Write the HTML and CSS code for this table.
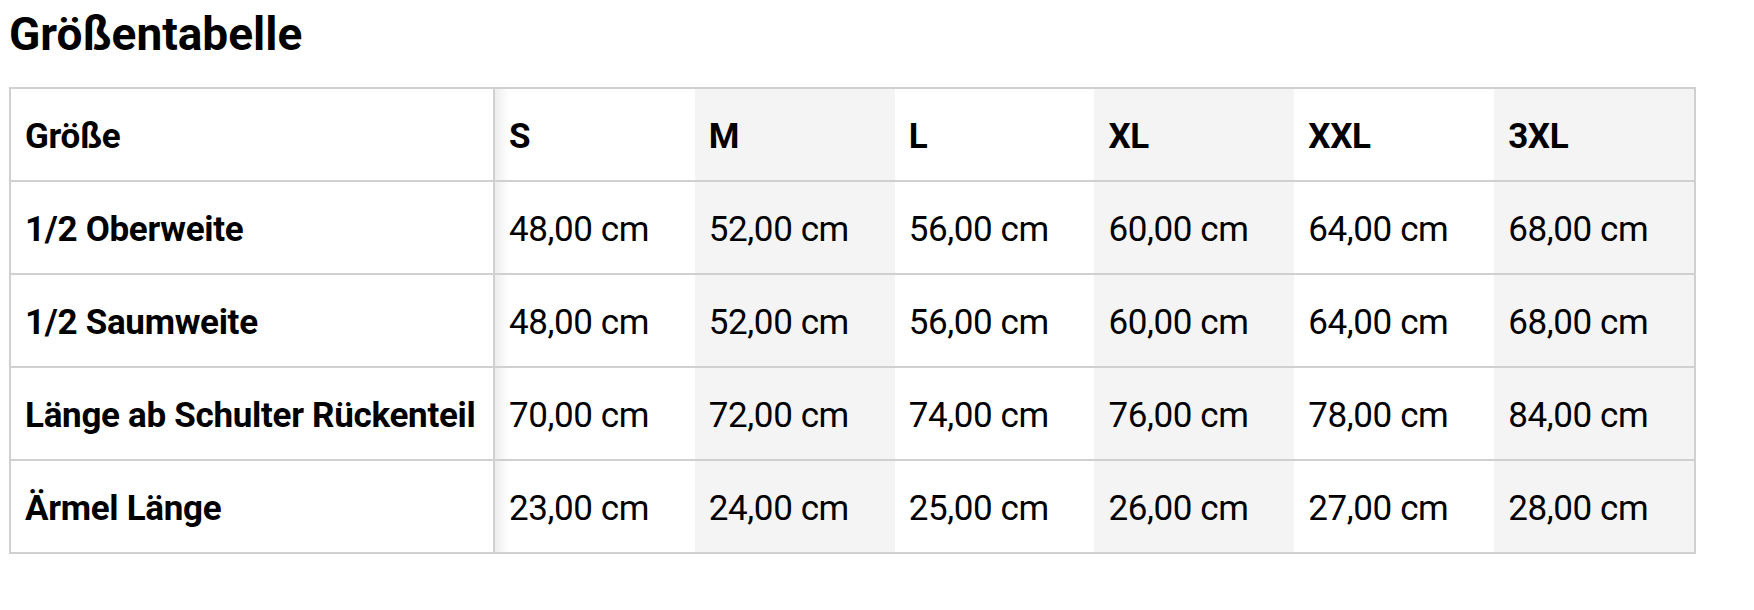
FILE: index.html
```html
<!DOCTYPE html>
<html lang="de">
<head>
<meta charset="utf-8">
<title>Größentabelle</title>
<link rel="stylesheet" href="styles.css">
</head>
<body>
<h1 class="title">Größentabelle</h1>
<table class="size-table">
  <tbody>
    <tr class="row head">
      <th class="label">Größe</th>
      <th class="cell first">S</th>
      <th class="cell alt">M</th>
      <th class="cell">L</th>
      <th class="cell alt">XL</th>
      <th class="cell">XXL</th>
      <th class="cell alt">3XL</th>
    </tr>
    <tr class="row">
      <th class="label">1/2 Oberweite</th>
      <td class="cell first">48,00 cm</td>
      <td class="cell alt">52,00 cm</td>
      <td class="cell">56,00 cm</td>
      <td class="cell alt">60,00 cm</td>
      <td class="cell">64,00 cm</td>
      <td class="cell alt">68,00 cm</td>
    </tr>
    <tr class="row">
      <th class="label">1/2 Saumweite</th>
      <td class="cell first">48,00 cm</td>
      <td class="cell alt">52,00 cm</td>
      <td class="cell">56,00 cm</td>
      <td class="cell alt">60,00 cm</td>
      <td class="cell">64,00 cm</td>
      <td class="cell alt">68,00 cm</td>
    </tr>
    <tr class="row">
      <th class="label">Länge ab Schulter Rückenteil</th>
      <td class="cell first">70,00 cm</td>
      <td class="cell alt">72,00 cm</td>
      <td class="cell">74,00 cm</td>
      <td class="cell alt">76,00 cm</td>
      <td class="cell">78,00 cm</td>
      <td class="cell alt">84,00 cm</td>
    </tr>
    <tr class="row last">
      <th class="label">Ärmel Länge</th>
      <td class="cell first">23,00 cm</td>
      <td class="cell alt">24,00 cm</td>
      <td class="cell">25,00 cm</td>
      <td class="cell alt">26,00 cm</td>
      <td class="cell">27,00 cm</td>
      <td class="cell alt">28,00 cm</td>
    </tr>
  </tbody>
</table>
</body>
</html>
```

FILE: styles.css
```css
html, body {
  margin: 0;
  padding: 0;
  background: #fff;
}

body {
  padding: 0 9px;
  font-family: Roboto, "Liberation Sans", Arial, sans-serif;
  color: #000;
}

.title {
  margin: 0;
  padding-top: 6px;
  height: 87px;
  box-sizing: border-box;
  font-size: 46px;
  line-height: 56px;
  font-weight: 700;
  letter-spacing: 0;
}

.size-table {
  width: 1687px;
  border-collapse: separate;
  border-spacing: 0;
  border: 2px solid #d0d0d0;
  table-layout: fixed;
}

.row > * {
  box-sizing: border-box;
  height: 93px;
  padding: 5px 14px 0;
  border-bottom: 2px solid #d0d0d0;
  text-align: left;
  vertical-align: middle;
  font-size: 35px;
  line-height: 40px;
  white-space: nowrap;
}

.row.last > * {
  height: 91px;
  border-bottom: 0;
}

.label {
  width: 484px;
  font-weight: 700;
  letter-spacing: -0.3px;
  border-right: 2px solid #d0d0d0;
}

.head .cell {
  font-weight: 700;
}

.cell {
  font-weight: 400;
  letter-spacing: -0.4px;
}

.cell.alt {
  background: #f4f4f4;
}

.cell.first {
  background: linear-gradient(to right, rgba(0, 0, 0, 0.07), rgba(0, 0, 0, 0) 14px);
}
```
